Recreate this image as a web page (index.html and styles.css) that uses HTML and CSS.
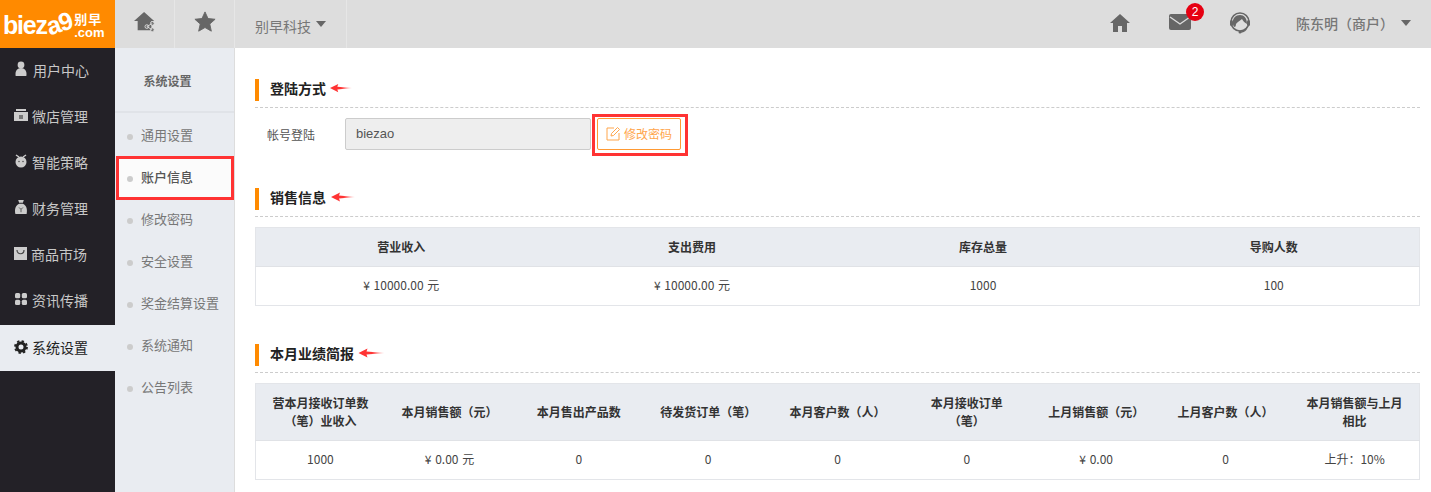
FILE: index.html
```html
<!DOCTYPE html>
<html lang="zh-CN">
<head>
<meta charset="utf-8">
<title>账户信息</title>
<link rel="stylesheet" href="styles.css">
</head>
<body>
<svg class="defs" width="0" height="0" aria-hidden="true"><defs><linearGradient id="fade"><stop offset="0.500" stop-color="#f33"/><stop offset="1" stop-color="#f33" stop-opacity="0.250"/></linearGradient></defs></svg>
<div class="app">
  <header class="topbar">
    <div class="logo">
      <span class="logo-main">biez<span class="logo-tilt">a9</span></span>
      <span class="logo-side"><span class="logo-cn">别早</span><span class="logo-com">.com</span></span>
    </div>
    <a class="top-cell cell-a">
      <svg class="top-icon" viewBox="0 0 24 24" width="22" height="22"><path d="M11 1 L22 11 H19 V21 H4 V11 H0 Z" fill="#666"/><circle cx="14" cy="17" r="2" fill="#666" stroke="#ddd"/><circle cx="20" cy="13.500" r="2" fill="#666" stroke="#ddd"/><circle cx="20" cy="20.500" r="2" fill="#666" stroke="#ddd"/><path d="M14 17 L20 13.500 M14 17 L20 20.500" stroke="#ddd" stroke-width="1"/></svg>
    </a>
    <a class="top-cell cell-b">
      <svg viewBox="0 0 24 24" width="22" height="22"><path d="M12 1 L15.300 8.200 L23 9 L17.200 14.200 L18.900 22 L12 18 L5.100 22 L6.800 14.200 L1 9 L8.700 8.200 Z" fill="#666" stroke="#666" stroke-linejoin="round"/></svg>
    </a>
    <a class="top-cell cell-c">别早科技<i class="caret"></i></a>
    <div class="top-right">
      <svg class="tr-home" viewBox="0 0 20 18" width="20" height="18"><path d="M10 0 L20 9 H17 V18 H12 V12 H8 V18 H3 V9 H0 Z" fill="#666"/></svg>
      <span class="mail">
        <svg viewBox="0 0 22 16" width="22" height="16"><rect width="22" height="16" rx="2" fill="#666"/><path d="M1 3 L11 10 L21 3" fill="none" stroke="#ddd" stroke-width="1.400"/></svg>
        <b class="badge">2</b>
      </span>
      <svg class="tr-head" viewBox="0 0 22 22" width="22" height="22"><circle cx="11" cy="10" r="9" fill="none" stroke="#666" stroke-width="1.500"/><path d="M4 12 C3 6 7 3 11 3 C15 3 18 6 18 12 C16 11 14 9 13 7 C11 9 8 10 7 12 C7 14 6 15 6 15 C5 15 4 14 4 12 Z" fill="#666"/><rect x="1" y="8" width="3" height="6" rx="1.500" fill="#666"/><rect x="18" y="8" width="3" height="6" rx="1.500" fill="#666"/><path d="M18 15 C17 18 15 20 12 20" fill="none" stroke="#666" stroke-width="1.300"/><circle cx="11" cy="20" r="1.500" fill="#666"/></svg>
      <span class="user">陈东明（商户）</span><i class="caret caret-user"></i>
    </div>
  </header>

  <nav class="nav">
    <a class="nav-item nav-wide"><svg viewBox="0 0 14 18" width="14" height="16"><circle cx="7" cy="4.500" r="3.800" fill="#ccc"/><path d="M1 17 C0 11 3 8 7 8 C11 8 14 11 13 17 Z" fill="#ccc"/></svg><span>用户中心</span></a>
    <a class="nav-item"><svg viewBox="0 0 14 14" width="14" height="14"><path d="M2 1 H12 V3 H2 Z M0 4 H14 V13 H0 Z" fill="#ccc"/><rect x="5" y="7" width="4" height="4" fill="#777"/></svg><span>微店管理</span></a>
    <a class="nav-item"><svg viewBox="0 0 14 14" width="14" height="14"><circle cx="7" cy="8" r="5.500" fill="#ccc"/><path d="M2 1 L5 3 M12 1 L9 3" stroke="#ccc" stroke-width="1.500"/><circle cx="5" cy="7.500" r="0.800" fill="#555"/><circle cx="9" cy="7.500" r="0.800" fill="#555"/></svg><span>智能策略</span></a>
    <a class="nav-item"><svg viewBox="0 0 14 16" width="14" height="15"><path d="M4 0 H10 L9 3 H5 Z M5 4 H9 C13 6 14 10 13 15 H1 C0 10 1 6 5 4 Z" fill="#ccc"/><path d="M5 8 L7 10 L9 8 M7 10 V13" stroke="#555" fill="none"/></svg><span>财务管理</span></a>
    <a class="nav-item"><svg viewBox="0 0 13 13" width="13" height="13"><rect width="13" height="13" fill="#ccc"/><path d="M3 3 C3 8 10 8 10 3" stroke="#444" fill="none" stroke-width="1.200"/></svg><span>商品市场</span></a>
    <a class="nav-item"><svg viewBox="0 0 14 12" width="14" height="12"><rect x="1" width="5.200" height="5.200" rx="1.500" fill="#ccc"/><rect x="7.800" width="5.200" height="5.200" rx="1.500" fill="#ccc"/><rect x="1" y="6.800" width="5.200" height="5.200" rx="1.500" fill="#ccc"/><rect x="7.800" y="6.800" width="5.200" height="5.200" rx="1.500" fill="#ccc"/></svg><span>资讯传播</span></a>
    <a class="nav-item is-active"><svg viewBox="0 0 14 14" width="14" height="14"><circle cx="7" cy="7" r="4" fill="none" stroke="#222" stroke-width="3"/><circle cx="7" cy="7" r="6" fill="none" stroke="#222" stroke-width="1.800" stroke-dasharray="2.400 2.300"/></svg><span>系统设置</span></a>
  </nav>

  <aside class="subnav">
    <h2 class="subnav-title">系统设置</h2>
    <ul class="subnav-list">
      <li class="sub-item">通用设置</li>
      <li class="sub-item is-active">账户信息</li>
      <li class="sub-item">修改密码</li>
      <li class="sub-item">安全设置</li>
      <li class="sub-item">奖金结算设置</li>
      <li class="sub-item">系统通知</li>
      <li class="sub-item">公告列表</li>
    </ul>
  </aside>

  <main class="main">
    <section class="section section-login">
      <h3 class="heading"><span>登陆方式</span><svg class="arrow" viewBox="0 0 24 10" width="22" height="10"><path d="M0 5 L9 0.500 L8 3.500 L24 5 L8 6.500 L9 9.500 Z" fill="url(#fade)"/></svg></h3>
      <div class="form-row">
        <label class="form-label">帐号登陆</label>
        <div class="form-input">biezao</div>
        <button class="btn" type="button">
          <svg viewBox="0 0 15 15" width="15" height="15"><path d="M8 2 H1 V14 H13 V7" fill="none" stroke="#ffa64d" stroke-width="1"/><path d="M5 10 L5.500 7.500 L11.500 1.500 L13.500 3.500 L7.500 9.500 Z" fill="none" stroke="#ffa64d"/></svg>修改密码
        </button>
      </div>
    </section>

    <section class="section section-sales">
      <h3 class="heading"><span>销售信息</span><svg class="arrow arrow-b" viewBox="0 0 24 10" width="24" height="10"><path d="M0 5 L9 0.500 L8 3.500 L24 5 L8 6.500 L9 9.500 Z" fill="url(#fade)"/></svg></h3>
      <table class="data">
        <thead><tr><th>营业收入</th><th>支出费用</th><th>库存总量</th><th>导购人数</th></tr></thead>
        <tbody><tr><td>¥ 10000.00 元</td><td>¥ 10000.00 元</td><td>1000</td><td>100</td></tr></tbody>
      </table>
    </section>

    <section class="section section-month">
      <h3 class="heading"><span>本月业绩简报</span><svg class="arrow arrow-c" viewBox="0 0 26 10" width="27" height="10"><path d="M0 5 L9 0.500 L8 3.500 L26 5 L8 6.500 L9 9.500 Z" fill="url(#fade)"/></svg></h3>
      <table class="data data-month">
        <thead><tr>
          <th>营本月接收订单数（笔）业收入</th><th>本月销售额（元）</th><th>本月售出产品数</th><th>待发货订单（笔）</th><th>本月客户数（人）</th><th>本月接收订单（笔）</th><th>上月销售额（元）</th><th>上月客户数（人）</th><th>本月销售额与上月相比</th>
        </tr></thead>
        <tbody><tr><td>1000</td><td>¥ 0.00 元</td><td>0</td><td>0</td><td>0</td><td>0</td><td>¥ 0.00</td><td>0</td><td>上升：10%</td></tr></tbody>
      </table>
    </section>
  </main>
</div>
</body>
</html>
```
FILE: styles.css
```css
* { box-sizing: border-box; }
html, body { margin: 0; height: 100%; overflow: hidden; }
body { font-family: "Noto Sans CJK SC", "Liberation Sans", sans-serif; font-size: 12px; color: #333; background: #fff; text-spacing-trim: space-all; }
.defs { display: block; }

.app { display: grid; grid-template-columns: 115px 120px 1fr; grid-template-rows: 48px 1fr; height: 492px; }

.topbar { grid-column: 1 / -1; display: flex; align-items: stretch; background: #ddd; }
.logo { width: 115px; background: #ff8a00; color: #fff; display: flex; align-items: center; padding: 3px 0 0 3px; overflow: hidden; }
.logo-main { font-family: "Liberation Sans", sans-serif; font-weight: 700; font-size: 25px; letter-spacing: -1.2px; line-height: 1; white-space: nowrap; }
.logo-tilt { display: inline-block; transform: rotate(-18deg) translateY(-2px); }
.logo-side { display: flex; flex-direction: column; margin-left: 2px; line-height: 1; font-weight: 700; }
.logo-cn { font-size: 13px; letter-spacing: 1px; margin-bottom: 1px; }
.logo-com { font-family: "Liberation Sans", sans-serif; font-size: 13px; letter-spacing: 0; }

.top-cell { display: flex; align-items: center; justify-content: center; border-right: 1px solid #e6e6e6; color: #777; font-size: 14px; }
.cell-a { width: 60px; padding-bottom: 4px; }
.cell-b { width: 60px; padding-bottom: 4px; }
.cell-c { width: 112px; padding-top: 4px; }
.caret { display: inline-block; width: 0; height: 0; border: 5px solid transparent; border-top: 6px solid #666; border-bottom: 0; margin-left: 5px; margin-top: -5px; }

.top-right { margin-left: auto; display: flex; align-items: center; padding-bottom: 2px; }
.tr-home { margin-right: 39px; }
.mail { position: relative; display: block; height: 16px; margin-right: 38px; margin-top: -2px; }
.mail svg { display: block; }
.badge { position: absolute; left: 17px; top: -11px; width: 18px; height: 18px; border-radius: 50%; background: #e60012; color: #fff; font: 400 12px/18px "Liberation Sans", sans-serif; text-align: center; }
.tr-head { margin-right: 45px; }
.user { font-size: 14px; font-weight: 500; color: #777; width: 98px; white-space: nowrap; margin-right: 7px; }
.caret-user { margin: 0 20px 0 0; }

.nav { background: #232127; }
.nav-item { display: flex; align-items: center; gap: 4px; height: 46px; padding: 0 0 0 14px; color: #c8c8c8; font-size: 14px; }
.nav-wide { gap: 5px; }
.nav-item svg { flex: none; margin-top: -4px; }
.nav-item span { line-height: 1; margin-top: -3px; }
.nav-item.is-active { background: #e9ecf1; color: #222; margin-top: 1px; }
.nav-item.is-active svg { margin-top: -3px; }

.subnav { background: #e9ecf1; border-right: 1px solid #ddd; }
.subnav-title { margin: 0; height: 65px; border-bottom: 2px solid #e0e3e8; font-size: 12px; font-weight: 700; color: #666; text-align: center; line-height: 66px; padding-right: 14px; }
.subnav-list { list-style: none; margin: 2px 0 0; padding: 0; }
.sub-item { display: flex; align-items: center; height: 42px; padding: 0 0 3px 26px; font-size: 13px; color: #777; white-space: nowrap; }
.sub-item::before { content: ""; width: 6px; height: 6px; border-radius: 50%; background: #ccc; margin: 4px 8px 0 -14px; flex: none; }
.sub-item.is-active { background: #fbfbfb; color: #555; font-weight: 500; outline: 3px solid #f33; outline-offset: -3px; margin: -1px 0 -1px 1px; height: 44px; padding: 0 0 3px 25px; }

.main { padding: 31px 11px 0 20px; min-width: 0; }
.section-login { height: 109px; }
.section-sales { height: 156px; }
.heading { display: flex; align-items: center; margin: 0; height: 29px; padding: 0 0 11px 15px; border-bottom: 1px dashed #ccc; font-size: 14px; font-weight: 700; color: #222; position: relative; }
.heading::before { content: ""; position: absolute; left: 0; top: 0; width: 4px; height: 22px; background: #ff8a00; }
.heading span { line-height: 18px; }
.arrow { margin-left: 4px; }
.arrow-b { margin-left: 5px; }
.arrow-c { margin-left: 4px; }

.form-row { display: flex; align-items: center; margin-top: 10px; }
.form-label { width: 90px; padding-left: 12px; font-size: 12px; color: #555; }
.form-input { width: 246px; height: 32px; background: #eee; border: 1px solid #ccc; border-radius: 2px; padding-left: 10px; font: 13px/30px "Liberation Sans", sans-serif; color: #555; }
.btn { position: relative; display: flex; align-items: center; gap: 3px; width: 84px; height: 32px; margin-left: 6px; padding: 0 0 2px 8px; background: #fff; border: 1px solid #ff9a33; border-radius: 2px; color: #ffa64d; font: 12px "Noto Sans CJK SC", sans-serif; }
.btn::after { content: ""; position: absolute; left: -6px; right: -8px; top: -5px; bottom: -7px; border: 3px solid #f33; }

.data { width: 100%; table-layout: fixed; border-collapse: collapse; border: 1px solid #e3e5e9; text-align: center; margin-top: 10px; }
.data th { background: #e9ecf1; font-size: 12px; font-weight: 700; color: #333; height: 39px; padding: 0 12px; line-height: 18px; border-bottom: 1px solid #e0e2e6; }
.data td { height: 39px; font-size: 12px; color: #444; padding: 0 0 4px; word-spacing: 1px; }
.data-month th { height: 57px; }
```
